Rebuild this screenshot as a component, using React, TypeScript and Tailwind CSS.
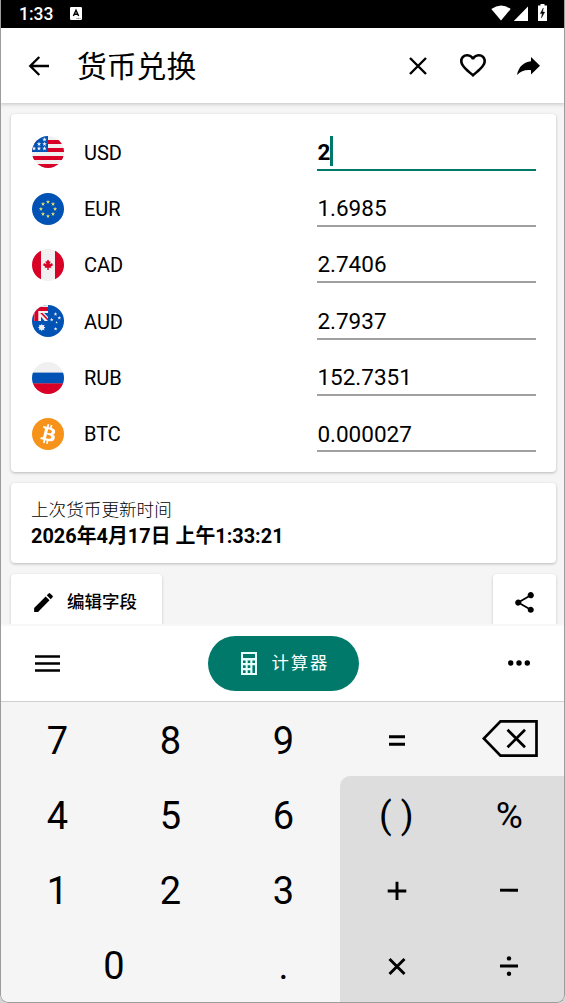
import React from "react";
import { MdEdit, MdShare } from "react-icons/md";

const starPath =
  "M0-5 1.18-1.62 4.76-1.55 1.9.62 2.94 4.05 0 2-2.94 4.05-1.9.62-4.76-1.55-1.18-1.62Z";

function Star({ x, y, s, fill }: { x: number; y: number; s: number; fill: string }) {
  return <path d={starPath} fill={fill} transform={`translate(${x} ${y}) scale(${s / 5})`} />;
}

function Flag({ code }: { code: string }) {
  const clip = `clip-${code}`;
  return (
    <svg viewBox="0 0 32 32" className="size-8 shrink-0">
      <defs>
        <clipPath id={clip}>
          <circle cx="16" cy="16" r="16" />
        </clipPath>
      </defs>
      <g clipPath={`url(#${clip})`}>
        {code === "USD" && (
          <>
            <rect width="32" height="32" fill="#f0f0f0" />
            {[4, 12, 20, 28].map((y) => (
              <rect key={y} y={y} width="32" height="4" fill="#d80027" />
            ))}
            <rect width="16" height="16" fill="#0052b4" />
            {[
              [12.5, 3.6],
              [7, 8],
              [12.5, 8],
              [2, 12.5],
              [7, 12.5],
              [12.5, 12.5],
            ].map(([x, y]) => (
              <Star key={`${x}-${y}`} x={x} y={y} s={2.4} fill="#f0f0f0" />
            ))}
          </>
        )}
        {code === "EUR" && (
          <>
            <rect width="32" height="32" fill="#0052b4" />
            {[
              [16, 8.9],
              [21, 11],
              [23.1, 16],
              [21, 21],
              [16, 23.1],
              [11, 21],
              [8.9, 16],
              [11, 11],
            ].map(([x, y]) => (
              <Star key={`${x}-${y}`} x={x} y={y} s={2.2} fill="#e6e070" />
            ))}
          </>
        )}
        {code === "CAD" && (
          <>
            <rect width="32" height="32" fill="#f0f0f0" />
            <rect width="9" height="32" fill="#d80027" />
            <rect x="23" width="9" height="32" fill="#d80027" />
            <path
              d="M18.8 17.4 21.5 16l-1.3-.7v-1.4l-2.8 1.4 1.4-2.8h-1.4L16 10.4l-1.4 2.1h-1.4l1.4 2.8-2.8-1.4v1.4l-1.3.7 2.7 1.4-.7 1.4h2.8v2.1h1.4v-2.1h2.8z"
              fill="#d80027"
            />
          </>
        )}
        {code === "AUD" && (
          <>
            <rect width="32" height="32" fill="#0052b4" />
            <path d="M2 0H16V16H2Z" fill="#f0f0f0" />
            <path d="M2.3 2H16V6H6.3V16H2.3Z" fill="#d80027" />
            <path d="M16 12V8H12.2ZM9 11.8V16H12.6Z" fill="#0052b4" />
            <path d="M8.2 8h2.2l5.6 5.7V16Z" fill="#d80027" />
            <circle cx="9.7" cy="22.3" r="2.4" fill="#f0f0f0" />
            <path
              d="m9.7 18.9.9 1.6 2-.7-.7 2 1.5.7-1.5.9.7 1.8-2-.6-.9 1.7-.9-1.7-1.8.6.6-1.8-1.7-.9 1.7-.7-.6-2 1.8.7Z"
              fill="#f0f0f0"
            />
            <Star x={23.5} y={9.1} s={2} fill="#f0f0f0" />
            <Star x={19.7} y={14.6} s={2} fill="#f0f0f0" />
            <Star x={27.3} y={13} s={2} fill="#f0f0f0" />
            <Star x={24.6} y={17.4} s={1.3} fill="#f0f0f0" />
            <Star x={23.6} y={24} s={2} fill="#f0f0f0" />
          </>
        )}
        {code === "RUB" && (
          <>
            <rect width="32" height="32" fill="#f0f0f0" />
            <rect y="10.6" width="32" height="11" fill="#0052b4" />
            <rect y="21.4" width="32" height="11" fill="#d80027" />
          </>
        )}
        {code === "BTC" && (
          <>
            <rect width="32" height="32" fill="#f7931a" />
            <path
              fill="#fff"
              d="M23.189 14.02c.314-2.096-1.283-3.223-3.465-3.975l.708-2.84-1.728-.43-.69 2.765c-.454-.114-.92-.22-1.385-.326l.695-2.783L15.596 6l-.708 2.839c-.376-.086-.746-.17-1.104-.26l.002-.009-2.384-.595-.46 1.846s1.283.294 1.256.312c.7.175.826.638.805 1.006l-.806 3.235c.048.012.11.03.18.057l-.183-.045-1.13 4.532c-.086.212-.303.531-.793.41.018.025-1.256-.313-1.256-.313l-.858 1.978 2.25.561c.418.105.828.215 1.231.318l-.715 2.872 1.727.43.708-2.84c.472.127.93.245 1.378.357l-.706 2.828 1.728.43.715-2.866c2.948.558 5.164.333 6.097-2.333.752-2.146-.037-3.385-1.588-4.192 1.13-.26 1.98-1.003 2.207-2.538zm-3.95 5.538c-.533 2.147-4.148.986-5.32.695l.95-3.805c1.172.293 4.929.872 4.37 3.11zm.535-5.569c-.487 1.953-3.495.96-4.47.717l.86-3.45c.975.243 4.118.696 3.61 2.733z"
            />
          </>
        )}
      </g>
    </svg>
  );
}

const rates = [
  { code: "USD", value: "2", active: true },
  { code: "EUR", value: "1.6985" },
  { code: "CAD", value: "2.7406" },
  { code: "AUD", value: "2.7937" },
  { code: "RUB", value: "152.7351" },
  { code: "BTC", value: "0.000027" },
];

function StatusBar() {
  return (
    <div className="flex h-7 shrink-0 items-center bg-black pr-[18px] pl-[19px] text-white">
      <span className="w-[51px] text-[17.5px] leading-7 font-medium">1:33</span>
      <svg viewBox="0 0 12 13" className="mt-[-1px] h-[13px] w-3">
        <rect width="12" height="13" rx="1.2" fill="#fff" />
        <path d="M3.4 9 6 3.2 8.6 9M4.4 7.2h3.2" stroke="#000" strokeWidth="1.4" fill="none" />
        <path d="M6.5 11.5h4" stroke="#777" strokeWidth="1" strokeDasharray="1 .6" />
      </svg>
      <svg viewBox="0 0 56 18" className="mt-[-2px] ml-auto h-[18px] w-14">
        <path d="M.3 5Q10-2.2 19.7 5L10 16.5Z" fill="#fff" />
        <path d="M37 2.5V17H22.8Z" fill="#fff" />
        <path d="M49.500 0h4v1.600H56V17H47V1.600h2.500Z" fill="#fff" />
        <path d="M52.300 4 49.300 9.600H51.300L50.400 14 53.700 8H51.600Z" fill="#000" stroke="#000" strokeWidth=".4" />
      </svg>
    </div>
  );
}

function Header() {
  return (
    <header className="z-10 flex h-[75px] shrink-0 items-center bg-white pr-[25px] pl-7 shadow-[0_1px_4px_rgba(0,0,0,0.22)]">
      <svg viewBox="0 0 22 20" className="h-5 w-[22px]" fill="none" stroke="#000" strokeWidth="2.4">
        <path d="M21 10H2.500M11.300 1 2.300 10l9 9" />
      </svg>
      <h1 className="ml-[27px] pt-[2px] text-[29.8px] leading-10 font-normal">货币兑换</h1>
      <svg viewBox="0 0 18 18" className="ml-auto size-[18px]" fill="none" stroke="#000" strokeWidth="2.4">
        <path d="m1 1 16 16M17 1 1 17" />
      </svg>
      <svg viewBox="2 3 20 18.35" className="ml-[33px] h-[23px] w-[26px]" preserveAspectRatio="none">
        <path d="M16.500 3c-1.740 0-3.410.810-4.500 2.090C10.910 3.810 9.240 3 7.500 3 4.420 3 2 5.420 2 8.500c0 3.780 3.400 6.860 8.550 11.540L12 21.350l1.450-1.320C18.600 15.360 22 12.280 22 8.500 22 5.420 19.580 3 16.500 3zm-4.400 15.550-.1.100-.1-.1C7.140 14.240 4 11.390 4 8.500 4 6.500 5.500 5 7.500 5c1.540 0 3.040.990 3.570 2.360h1.870C13.460 5.990 14.960 5 16.500 5c2 0 3.500 1.500 3.500 3.500 0 2.890-3.140 5.740-7.900 10.050z" />
      </svg>
      <svg viewBox="0 0 23 18" className="mt-px ml-[31px] h-[18px] w-[23px]">
        <path d="M14 0 23 8.700 14 17.400V13.200C8 12.600 4 14 0 18 1.500 9.500 7 4.800 14 4.200Z" />
      </svg>
    </header>
  );
}

function RatesCard() {
  return (
    <section className="flex h-[358px] shrink-0 flex-col rounded bg-white pt-[10px] pr-5 pl-[21px] shadow-[0_1px_3px_rgba(0,0,0,0.25)]">
      {rates.map((r) => (
        <div key={r.code} className="flex h-[56.35px] shrink-0 items-center">
          <Flag code={r.code} />
          <span className="ml-5 w-[233.4px] pt-px text-[20px] leading-6">{r.code}</span>
          <div
            className={
              r.active
                ? "flex h-[37px] flex-1 items-center border-b-2 border-[#00796b] text-[22.5px] font-bold"
                : "flex h-[37px] flex-1 items-center border-b-2 border-[#a0a0a0] text-[22.5px]"
            }
          >
            <span className="pt-[3px]">{r.value}</span>
            {r.active && <span className="h-[30px] w-[2.5px] bg-[#00796b]" />}
          </div>
        </div>
      ))}
    </section>
  );
}

function BottomBar() {
  return (
    <nav className="flex h-[76px] shrink-0 items-center justify-between border-b border-[#cfcfcf] bg-white pr-[35px] pb-px pl-[35px]">
      <svg viewBox="0 0 25 17" className="h-[17px] w-[25px]" stroke="#000" strokeWidth="2.4">
        <path d="M0 1.500h25M0 8.500h25M0 15.500h25" />
      </svg>
      <button className="mr-[2px] flex h-[55px] w-[151px] items-center rounded-full bg-[#00796b] pl-[33px] text-white">
        <svg viewBox="0 0 16 23" className="h-[23px] w-4">
          <path
            fillRule="evenodd"
            fill="#e6fffb"
            d="M0 0h16v23H0ZM2 2v4h12V2ZM2 8.500v2.600h2.600V8.500ZM6.700 8.500v2.600h2.600V8.500ZM11.400 8.500v2.600H14V8.500ZM2 13.300v2.600h2.600v-2.600ZM6.700 13.300v2.600h2.600v-2.600ZM11.400 13.300V21H14v-7.700ZM2 18.300V21h2.600v-2.700ZM6.700 18.300V21h2.600v-2.700Z"
          />
        </svg>
        <span className="ml-[15px] text-[17.3px] leading-6 tracking-[2px] whitespace-nowrap">计算器</span>
      </button>
      <svg viewBox="0 0 22 6" className="h-1.5 w-[22px]">
        <circle cx="2.700" cy="3" r="2.700" />
        <circle cx="11" cy="3" r="2.700" />
        <circle cx="19.300" cy="3" r="2.700" />
      </svg>
    </nav>
  );
}

const keyClass = "flex items-center justify-center pt-[2px] text-[38px] leading-none";

function Key({ children, wide }: { children: React.ReactNode; wide?: boolean }) {
  return <button className={wide ? `${keyClass} col-span-2` : keyClass}>{children}</button>;
}

function Op({ d }: { d: string }) {
  return (
    <svg viewBox="0 0 20 20" className="ml-px size-5" stroke="#000" strokeWidth="2.9" fill="none">
      <path d={d} />
    </svg>
  );
}

function Keypad() {
  return (
    <div className="flex min-h-0 flex-1 bg-[#f5f5f5]">
      <div className="grid w-[340px] grid-cols-3 grid-rows-4 pl-px">
        {["7", "8", "9", "4", "5", "6", "1", "2", "3"].map((n) => (
          <Key key={n}>{n}</Key>
        ))}
        <Key wide>0</Key>
        <Key>.</Key>
      </div>
      <div className="flex w-[225px] flex-col">
        <div className="grid h-[74px] grid-cols-2">
          <Key>
            <Op d="M2 6.700h16M2 14.200h16" />
          </Key>
          <Key>
            <svg viewBox="0 0 56 37" className="mt-[-3px] ml-[2px] h-[37px] w-14" fill="none" stroke="#000" strokeWidth="2.7">
              <path d="M54.500 1.400V35.600H18.500L1.800 18.500 18.500 1.400Z" />
              <path d="m25.500 9.800 17.500 17.500M43 9.800 25.500 27.300" />
            </svg>
          </Key>
        </div>
        <div className="grid flex-1 grid-cols-2 grid-rows-3 rounded-tl-[10px] bg-[#dddddd]">
          <Key>
            <span className="pt-px text-[37px] whitespace-pre">( )</span>
          </Key>
          <Key>
            <span className="pt-px pl-px text-[37px]">%</span>
          </Key>
          <Key>
            <Op d="M.7 11h18.600M10 1.700v18.300" />
          </Key>
          <Key>
            <Op d="M1 10.200h18" />
          </Key>
          <Key>
            <Op d="m2.500 3 15 15M17.500 3l-15 15" />
          </Key>
          <Key>
            <svg viewBox="0 0 20 20" className="ml-px size-5">
              <path d="M1 8.500h18v3H1Z" />
              <circle cx="10" cy="2.400" r="2.200" />
              <circle cx="10" cy="17.700" r="2.200" />
            </svg>
          </Key>
        </div>
      </div>
    </div>
  );
}

export default function App() {
  return (
    <div className="h-[1003px] w-[565px] bg-[#d5d5d5] font-['Roboto','Noto_Sans_CJK_SC',sans-serif] text-black">
      <div className="relative flex h-[1003px] flex-col overflow-hidden rounded-b-lg">
        <StatusBar />
        <Header />
        <main className="flex h-[521px] shrink-0 flex-col gap-[11px] overflow-hidden bg-[#f5f5f5] pt-[11px] pr-[9px] pl-[11px]">
          <RatesCard />
          <section className="h-20 shrink-0 rounded bg-white pt-[14px] pl-[20px] shadow-[0_1px_3px_rgba(0,0,0,0.25)]">
            <p className="text-[17.6px] leading-[26px] font-light">上次货币更新时间</p>
            <p className="pt-px text-[19.9px] leading-[26px] font-bold">2026年4月17日 上午1:33:21</p>
          </section>
          <div className="flex shrink-0 justify-between">
            <button className="flex h-14 w-[151px] items-center rounded bg-white pl-5 text-[17.5px] font-medium shadow-[0_1px_3px_rgba(0,0,0,0.2)]">
              <MdEdit className="mr-[11px] size-[25px]" />
              <span className="pt-px">编辑字段</span>
            </button>
            <button className="flex h-14 w-[63px] items-center justify-center rounded bg-white shadow-[0_1px_3px_rgba(0,0,0,0.2)]">
              <MdShare className="size-[25px]" />
            </button>
          </div>
        </main>
        <div className="h-0.5 shrink-0 bg-[#f8f8f8]" />
        <BottomBar />
        <Keypad />
        <div className="pointer-events-none absolute inset-0 z-20 rounded-b-lg border border-t-0 border-[#9c9c9c]" />
      </div>
    </div>
  );
}
